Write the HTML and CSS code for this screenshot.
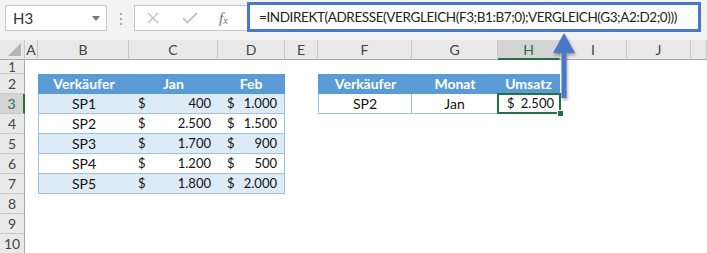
FILE: index.html
```html
<!DOCTYPE html>
<html lang="de">
<head>
    <meta charset="UTF-8">
    <title>INDIREKT ADRESSE VERGLEICH</title>
    <link rel="stylesheet" href="styles.css">
</head>
<body>
    <div class="toolbar">
        <div class="namebox">
            <span>H3</span>
            <span class="caret"></span>
        </div>
        <div class="grip"><i></i><i></i><i></i></div>
        <div class="fbtns">
            <svg class="ico-x" width="12" height="12" viewBox="0 0 12 12">
                <path d="M1 1 L11 11 M11 1 L1 11" stroke="#c4c4c4" stroke-width="1.6" fill="none"/>
            </svg>
            <svg class="ico-ok" width="16" height="12" viewBox="0 0 16 12">
                <path d="M1 6 L5.5 10.5 L15 1" stroke="#c4c4c4" stroke-width="1.8" fill="none"/>
            </svg>
            <span class="fx"><i>f</i><sub>x</sub></span>
        </div>
        <div class="formula">=INDIREKT(ADRESSE(VERGLEICH(F3;B1:B7;0);VERGLEICH(G3;A2:D2;0)))</div>
    </div>

    <div class="sheet">
        <!-- column headers -->
        <div class="colhead corner"></div>
        <div class="colhead">A</div>
        <div class="colhead">B</div>
        <div class="colhead">C</div>
        <div class="colhead">D</div>
        <div class="colhead">E</div>
        <div class="colhead">F</div>
        <div class="colhead">G</div>
        <div class="colhead active">H</div>
        <div class="colhead">I</div>
        <div class="colhead">J</div>
        <div class="colhead"></div>

        <!-- row 1 -->
        <div class="rh short">1</div>

        <!-- row 2 -->
        <div class="rh">2</div>
        <div class="cb th first">Verkäufer</div>
        <div class="cc th">Jan</div>
        <div class="cd th last">Feb</div>
        <div class="cf th first">Verkäufer</div>
        <div class="cg th">Monat</div>
        <div class="ch th last">Umsatz</div>

        <!-- row 3 -->
        <div class="rh active">3</div>
        <div class="cb td band first">SP1</div>
        <div class="cc td band money"><span>$</span><span>400</span></div>
        <div class="cd td band money last"><span>$</span><span>1.000</span></div>
        <div class="cf td first split">SP2</div>
        <div class="cg td split">Jan</div>
        <div class="ch td money last selected"><span>$</span><span>2.500</span></div>

        <!-- row 4 -->
        <div class="rh">4</div>
        <div class="cb td first">SP2</div>
        <div class="cc td money"><span>$</span><span>2.500</span></div>
        <div class="cd td money last"><span>$</span><span>1.500</span></div>

        <!-- row 5 -->
        <div class="rh">5</div>
        <div class="cb td band first">SP3</div>
        <div class="cc td band money"><span>$</span><span>1.700</span></div>
        <div class="cd td band money last"><span>$</span><span>900</span></div>

        <!-- row 6 -->
        <div class="rh">6</div>
        <div class="cb td first">SP4</div>
        <div class="cc td money"><span>$</span><span>1.200</span></div>
        <div class="cd td money last"><span>$</span><span>500</span></div>

        <!-- row 7 -->
        <div class="rh">7</div>
        <div class="cb td band first">SP5</div>
        <div class="cc td band money"><span>$</span><span>1.800</span></div>
        <div class="cd td band money last"><span>$</span><span>2.000</span></div>

        <div class="rh">8</div>
        <div class="rh">9</div>
        <div class="rh">10</div>
    </div>

    <!-- arrow pointing from H3 to the formula bar -->
    <svg class="arrow" width="40" height="80" viewBox="0 0 40 80">
        <path d="M16.5 22 L21.5 22 L21.5 68 L16.5 68 Z" fill="#4a78c8"/>
        <path d="M19 3 L30 23 L8 23 Z" fill="#4a78c8"/>
    </svg>
</body>
</html>
```

FILE: styles.css
```css
body {
    margin: 0;
    width: 707px;
    height: 253px;
    overflow: hidden;
    position: relative;
    font-family: Lato, "Liberation Sans", sans-serif;
    background-color: #fff;
    color: #111;
}

/* formula bar */

.toolbar {
    height: 40px;
    background-color: #f3f3f3;
    display: flex;
    align-items: flex-start;
}

.namebox {
    margin: 5px 0 0 5px;
    width: 102px;
    height: 26px;
    box-sizing: border-box;
    border: 1px solid #c6c6c6;
    background-color: #fff;
    display: flex;
    align-items: center;
    justify-content: space-between;
    padding: 0 6px 0 7px;
    font-size: 15px;
    color: #333;
}

.caret {
    border-left: 4px solid transparent;
    border-right: 4px solid transparent;
    border-top: 5px solid #777;
}

.grip {
    margin: 13px 0 0 13px;
    display: flex;
    flex-direction: column;
    gap: 3px;
}

.grip i {
    width: 2px;
    height: 2px;
    background-color: #a8a8a8;
}

.fbtns {
    margin: 5px 0 0 12px;
    width: 114px;
    height: 26px;
    box-sizing: border-box;
    border: 1px solid #c6c6c6;
    border-right: none;
    background-color: #fff;
    display: flex;
    align-items: center;
    padding-left: 12px;
}

.ico-ok {
    margin-left: 23px;
}

.fx {
    margin-left: 21px;
    font-family: "Liberation Serif", serif;
    font-size: 15px;
    color: #707070;
}

.fx sub {
    font-style: italic;
    font-size: 10px;
    vertical-align: -1px;
}

.formula {
    margin: 2px 0 0 -1px;
    width: 454px;
    height: 30px;
    box-sizing: border-box;
    border: 3px solid #4a78c8;
    background-color: #fff;
    padding-left: 9px;
    font-size: 13.5px;
    letter-spacing: -0.4px;
    line-height: 24px;
    color: #222;
    white-space: nowrap;
    overflow: hidden;
}

/* sheet */

.sheet {
    display: grid;
    grid-template-columns: 25px 13px 91px 89px 67px 33px 94px 86px 62px 67px 64px 16px;
    grid-template-rows: 20px 14px;
    grid-auto-rows: 20px;
    font-size: 13px;
}

.colhead {
    background-color: #e9e9e9;
    border-right: 1px solid #c8c8c8;
    border-bottom: 1px solid #a9a9a9;
    box-sizing: border-box;
    text-align: center;
    line-height: 19px;
    font-size: 14px;
    color: #444;
}

.colhead.corner {
    position: relative;
}

.colhead.corner::after {
    content: "";
    position: absolute;
    right: 3px;
    bottom: 3px;
    border-left: 13px solid transparent;
    border-bottom: 13px solid #b6b6b6;
}

.colhead.active {
    background-color: #d4d4d4;
    color: #217346;
    border-bottom: 2px solid #217346;
}

.rh {
    grid-column: 1;
    background-color: #e9e9e9;
    border-right: 1px solid #a9a9a9;
    border-bottom: 1px solid #c8c8c8;
    box-sizing: border-box;
    text-align: center;
    line-height: 20px;
    color: #444;
    font-size: 14px;
}

.rh.short {
    line-height: 14px;
    font-size: 13px;
}

.rh.active {
    background-color: #d4d4d4;
    color: #217346;
    border-right: 2px solid #217346;
}

.cb { grid-column: 3; }
.cc { grid-column: 4; }
.cd { grid-column: 5; }
.cf { grid-column: 7; }
.cg { grid-column: 8; }
.ch { grid-column: 9; }

.th {
    background-color: #5b9bd5;
    color: #fff;
    font-weight: 700;
    font-size: 14px;
    text-align: center;
    line-height: 20px;
}

.td {
    box-sizing: border-box;
    border-bottom: 1px solid #9bc2e6;
    text-align: center;
    line-height: 19px;
    font-size: 14px;
}

.first {
    border-left: 1px solid #9bc2e6;
}

.last {
    border-right: 1px solid #9bc2e6;
}

.th.first {
    border-left-color: #5b9bd5;
}

.th.last {
    border-right-color: #5b9bd5;
}

.band {
    background-color: #ddebf7;
}

.split {
    border-right: 1px solid #9bc2e6;
}

.money {
    display: flex;
    justify-content: space-between;
    padding: 0 7px 0 9px;
    font-size: 13px;
}

.selected {
    position: relative;
    padding: 0 5px 0 9px;
}

.selected::before {
    content: "";
    position: absolute;
    left: -1px;
    top: -1px;
    right: -2px;
    bottom: -1px;
    border: 2px solid #217346;
}

.selected::after {
    content: "";
    position: absolute;
    right: -5px;
    bottom: -4px;
    width: 5px;
    height: 5px;
    background-color: #217346;
    border: 1px solid #fff;
}

.arrow {
    position: absolute;
    left: 545px;
    top: 30px;
    filter: drop-shadow(1px 2px 1.5px rgba(0, 0, 0, 0.35));
}
```
